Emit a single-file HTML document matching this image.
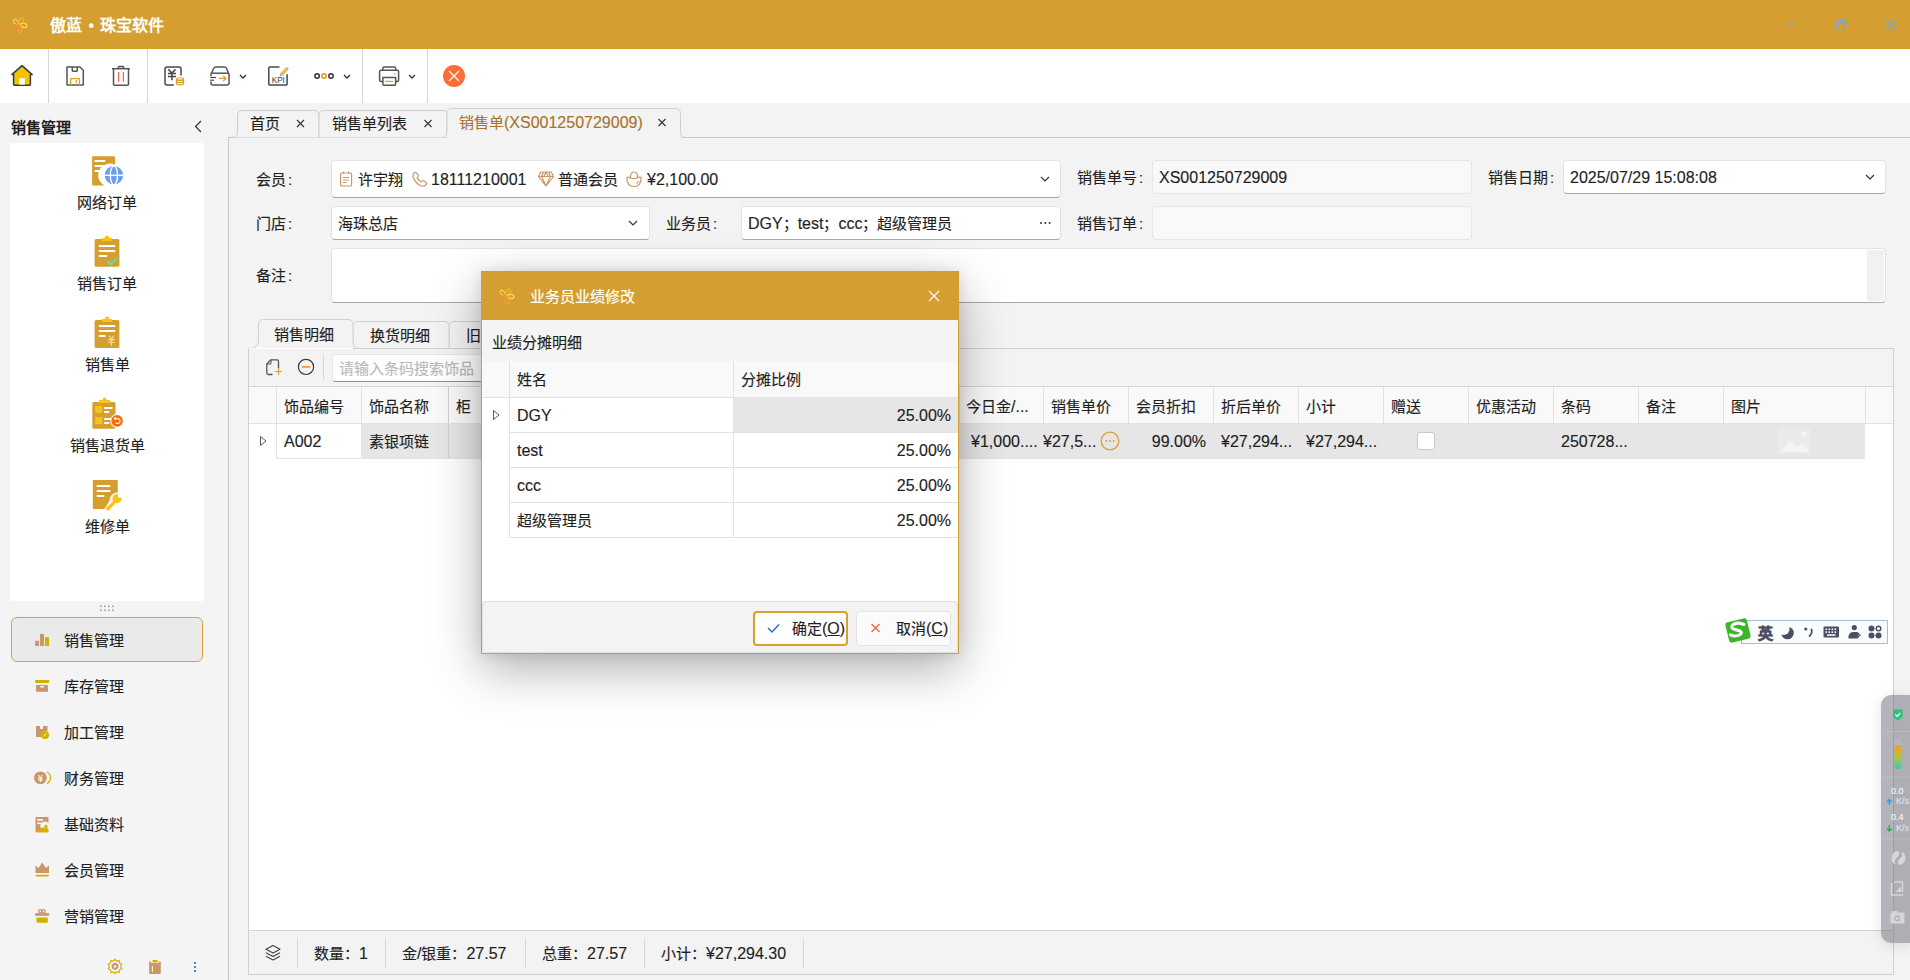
<!DOCTYPE html>
<html lang="zh-CN"><head><meta charset="utf-8">
<style>
*{box-sizing:border-box;margin:0;padding:0}
html,body{width:1910px;height:980px;overflow:hidden;background:#f3f3f3;font-family:"Liberation Sans",sans-serif;font-size:15px;color:#1f1f1f;-webkit-text-stroke:0.15px currentColor}
.a{position:absolute}
.t{position:absolute;white-space:nowrap;line-height:22px}
#title{left:0;top:0;width:1910px;height:49px;background:#d49f30}
#tb{left:0;top:49px;width:1910px;height:54px;background:#fff}
.sep{position:absolute;top:49px;width:1px;height:54px;background:#d6d6d6}
#side{left:0;top:103px;width:228px;height:877px;background:#f4f4f4}
.inp{position:absolute;background:#fff;border:1px solid #e3e3e3;border-bottom:1px solid #a8a8a8;border-radius:4px}
.ro{position:absolute;background:#f9f9f9;border:1px solid #e6e6e6;border-radius:4px}
.lbl{position:absolute;white-space:nowrap;line-height:22px;color:#1f1f1f}
.n{font-size:16px}
.col{position:absolute;top:0;height:100%;border-left:1px solid #e3e3e3}
</style></head><body>
<!-- title bar -->
<div id="title" class="a"></div>
<div class="t" style="left:50px;top:15px;color:#fff;font-weight:bold;font-size:16px;-webkit-text-stroke:0">傲蓝<span style="margin:0 1px 0 2px"> • </span>珠宝软件</div>

<!-- toolbar -->
<div id="tb" class="a"></div>
<div class="sep" style="left:48px"></div>
<div class="sep" style="left:147px"></div>
<div class="sep" style="left:362px"></div>
<div class="sep" style="left:427px"></div>


<svg class="a" style="left:0;top:0" width="1910" height="103" viewBox="0 0 1910 103">
 <!-- logo -->
 <g transform="translate(19.3,25)" fill="none" stroke-width="1.3"><path stroke="#f7d23a" d="M0,0 C-3.2,-2.5 -3.4,-6.5 -1.2,-7.6 C1.2,-8.4 2.6,-5 0,0Z" transform="rotate(-41)"/><path stroke="#f5b032" d="M0,0 C-3.2,-2.5 -3.4,-6.5 -1.2,-7.6 C1.2,-8.4 2.6,-5 0,0Z" transform="rotate(31)"/><path stroke="#fbe04a" d="M0,0 C-3.2,-2.5 -3.4,-6.5 -1.2,-7.6 C1.2,-8.4 2.6,-5 0,0Z" transform="rotate(103)"/><path stroke="#f3a53a" d="M0,0 C-3.2,-2.5 -3.4,-6.5 -1.2,-7.6 C1.2,-8.4 2.6,-5 0,0Z" transform="rotate(175)"/><path stroke="#f08a35" d="M0,0 C-3.2,-2.5 -3.4,-6.5 -1.2,-7.6 C1.2,-8.4 2.6,-5 0,0Z" transform="rotate(247)"/></g>
 <!-- window controls -->
 <g stroke="#72a9de" stroke-width="1.3" fill="none" stroke-linecap="round">
  <line x1="1786.5" y1="25.5" x2="1796" y2="25.5"/>
  <path d="M1838.5,22 V21.5 Q1838.5,20 1840,20 H1844.5 Q1846,20 1846,21.5 V26 Q1846,27.5 1844.5,27.5 H1844"/>
  <rect x="1836.5" y="22.3" width="7.2" height="7.4" rx="1.3"/>
  <line x1="1886" y1="20" x2="1896" y2="30"/><line x1="1896" y1="20" x2="1886" y2="30"/>
 </g>
 <!-- home -->
 <path d="M11.8,74.6 L22,65.6 L32.2,74.6 L30.4,74.6 L30.4,84.2 Q30.4,85.3 29.3,85.3 L14.7,85.3 Q13.6,85.3 13.6,84.2 L13.6,74.6 Z" fill="#f5c400" stroke="#333a45" stroke-width="1.5" stroke-linejoin="round"/>
 <rect x="19.2" y="78.2" width="5.6" height="6.4" fill="#fff"/>
 <!-- save -->
 <g fill="none" stroke="#555" stroke-width="1.5" stroke-linejoin="round">
  <path d="M67,67 H80 L83.3,70.3 V84.6 Q83.3,85.1 82.8,85.1 H67.5 Q67,85.1 67,84.6 Z"/>
  <path d="M72.3,67 V70.5 Q72.3,71.2 73,71.2 H76.6 Q77.3,71.2 77.3,70.5 V67"/>
 </g>
 <path d="M70.6,85 V79.2 Q70.6,78.6 71.2,78.6 H78.9 Q79.5,78.6 79.5,79.2 V85" fill="none" stroke="#d9a030" stroke-width="1.3"/>
 <line x1="76.3" y1="80" x2="76.3" y2="83" stroke="#d9a030" stroke-width="1.3"/>
 <!-- trash -->
 <g fill="none" stroke="#555" stroke-width="1.5" stroke-linejoin="round">
  <line x1="112" y1="68.7" x2="129.8" y2="68.7"/>
  <path d="M113.5,68.7 V84.6 Q113.5,85.3 114.2,85.3 H127.8 Q128.5,85.3 128.5,84.6 V68.7"/>
  <path d="M118.4,68.5 V67.2 Q118.4,66.6 119,66.6 H123 Q123.6,66.6 123.6,67.2 V68.5"/>
 </g>
 <g stroke="#f7643a" stroke-width="1.2"><line x1="118.6" y1="72" x2="118.6" y2="81.8"/><line x1="123.4" y1="72" x2="123.4" y2="81.8"/></g>
 <!-- yen doc -->
 <g fill="none" stroke="#484848" stroke-width="1.5" stroke-linejoin="round">
  <path d="M181,75.5 V68.9 Q181,66.9 179,66.9 H167 Q165,66.9 165,68.9 V83 Q165,85 167,85 H173.8"/>
  <path d="M168.3,69.4 L171.9,73 L175.5,69.4 M167.9,73.5 H176 M167.9,76.4 H176 M171.9,73 V80.2"/>
 </g>
 <g fill="none" stroke="#d9a030" stroke-width="1.1">
  <ellipse cx="180" cy="79" rx="3.6" ry="1.2"/><ellipse cx="180" cy="81.3" rx="3.6" ry="1.2"/><ellipse cx="180" cy="83.6" rx="3.6" ry="1.3"/>
  <path d="M176.4,79 V83.6 M183.6,79 V83.6"/>
 </g>
 <!-- drawer -->
 <g fill="none" stroke="#555" stroke-width="1.5" stroke-linejoin="round">
  <path d="M211,76.2 V74 L213.7,68.5 Q214.4,66.9 216,66.9 H224.3 Q225.9,66.9 226.6,68.5 L229,74 V83 Q229,85 227,85 H213 Q211,85 211,83 V81.4"/>
  <line x1="211.5" y1="73.2" x2="228.8" y2="73.2"/>
 </g>
 <g stroke="#444" stroke-width="1.2"><line x1="210.3" y1="77.5" x2="216" y2="77.5"/><line x1="210.3" y1="80.2" x2="214" y2="80.2"/></g>
 <path d="M219,78.4 H226 M223.3,75.9 L225.9,78.4 L223.3,80.9" fill="none" stroke="#d9a030" stroke-width="1.4"/>
 <!-- chevrons -->
 <g fill="none" stroke="#333" stroke-width="1.3"><path d="M240,75 L243,78 L246,75"/><path d="M344,75 L347,78 L350,75"/><path d="M409,75 L412,78 L415,75"/></g>
 <!-- KPI -->
 <g fill="none" stroke="#484848" stroke-width="1.5" stroke-linejoin="round">
  <path d="M279.4,66.9 H270 Q268.8,66.9 268.8,68.1 V83.9 Q268.8,85.1 270,85.1 H285.9 Q287.1,85.1 287.1,83.9 V74.2"/>
 </g>
 <text x="271.7" y="82.6" font-family="Liberation Sans" font-size="8.2" fill="#404040">KPI</text>
 <path d="M280.8,73.8 L286.4,68.1 Q286.9,67.6 287.4,68.1 L287.7,68.4 Q288.2,68.9 287.7,69.4 L282.1,75 L280.3,75.4 Z" fill="none" stroke="#d9a030" stroke-width="1.2" stroke-linejoin="round"/>
 <!-- dots -->
 <g fill="none" stroke-width="1.6"><circle cx="317.1" cy="76.1" r="2.2" stroke="#3d3d3d"/><circle cx="324" cy="76.1" r="2.2" stroke="#d9a030"/><circle cx="331" cy="76.1" r="2.2" stroke="#3d3d3d"/></g>
 <!-- printer -->
 <g fill="none" stroke="#555" stroke-width="1.5" stroke-linejoin="round">
  <path d="M382.9,70.3 V68 Q382.9,66.9 384,66.9 H394.5 Q395.6,66.9 395.6,68 V70.3"/>
  <path d="M382.6,81.5 H381 Q379.6,81.5 379.6,80 V71.8 Q379.6,70.3 381,70.3 H397.3 Q398.6,70.3 398.6,71.8 V80 Q398.6,81.5 397.3,81.5 H395.8"/>
  <path d="M382.3,77.5 H396.2"/>
  <path d="M382.9,77.8 V84 Q382.9,85.2 384,85.2 H394.5 Q395.6,85.2 395.6,84 V77.8"/>
 </g>
 <line x1="385.2" y1="81.4" x2="393" y2="81.4" stroke="#d9a030" stroke-width="1.2"/>
 <rect x="394.2" y="73.3" width="1.4" height="1.4" fill="#d9a030"/>
 <!-- close red -->
 <circle cx="454" cy="76" r="11" fill="#fd6d35"/>
 <path d="M449,71 L459,81 M459,71 L449,81" stroke="#fff" stroke-width="1.2"/>
</svg>

<!-- sidebar -->
<div id="side" class="a"></div>
<div class="t" style="left:11px;top:117px;font-weight:bold;font-size:15px;-webkit-text-stroke:0">销售管理</div>
<svg class="a" style="left:0;top:103px" width="228" height="877" viewBox="0 103 228 877">
 <path d="M201,121 L195.5,126.5 L201,132" fill="none" stroke="#333" stroke-width="1.2"/>
</svg>
<div class="a" style="left:10px;top:143px;width:194px;height:458px;background:#fff"></div>
<div class="t" style="left:0;width:214px;text-align:center;top:192px">网络订单</div>
<div class="t" style="left:0;width:214px;text-align:center;top:273px">销售订单</div>
<div class="t" style="left:0;width:214px;text-align:center;top:354px">销售单</div>
<div class="t" style="left:0;width:214px;text-align:center;top:435px">销售退货单</div>
<div class="t" style="left:0;width:214px;text-align:center;top:516px">维修单</div>
<div class="a" style="left:11px;top:617px;width:192px;height:45px;border:1px solid #d9a13a;border-radius:6px;background:#eaeaea"></div>
<div class="t" style="left:64px;top:630px">销售管理</div>
<div class="t" style="left:64px;top:676px">库存管理</div>
<div class="t" style="left:64px;top:722px">加工管理</div>
<div class="t" style="left:64px;top:768px">财务管理</div>
<div class="t" style="left:64px;top:814px">基础资料</div>
<div class="t" style="left:64px;top:860px">会员管理</div>
<div class="t" style="left:64px;top:906px">营销管理</div>
<svg class="a" style="left:0;top:140px" width="228" height="840" viewBox="0 140 228 840">
 <!-- 网络订单 -->
 <path d="M93.1,156.2 H114.1 Q115.1,156.2 115.1,157.2 V164.8 A10.8,10.8 0 0 0 104.6,185.6 H93.1 Q92.1,185.6 92.1,184.6 V157.2 Q92.1,156.2 93.1,156.2Z" fill="#d49f30"/>
 <g stroke="#fff" stroke-width="2" stroke-linecap="round"><line x1="95.3" y1="161" x2="104.5" y2="161"/><line x1="95.3" y1="166" x2="103.5" y2="166"/><line x1="95.3" y1="171" x2="100.5" y2="171"/></g>
 <circle cx="113.9" cy="175.3" r="9.2" fill="#6c9cf3"/>
 <g fill="none" stroke="#fff" stroke-width="1.4"><line x1="104" y1="175.3" x2="124" y2="175.3"/><ellipse cx="113.9" cy="175.3" rx="3.6" ry="9.4"/></g>
 <!-- 销售订单 -->
 <rect x="94.6" y="239" width="24.8" height="27.7" rx="1.5" fill="#d49f30"/>
 <rect x="101.8" y="238" width="10.3" height="3" fill="#fbc31a"/><circle cx="107" cy="237.7" r="2.2" fill="#fbc31a"/>
 <g stroke="#fff" stroke-width="2" stroke-linecap="round"><line x1="99.6" y1="246" x2="114.4" y2="246"/><line x1="99.6" y1="251" x2="114.4" y2="251"/><line x1="99.6" y1="256" x2="106.4" y2="256"/></g>
 <path d="M108,261.7 L110.7,264.3 L116.5,258.3" fill="none" stroke="#62d9b9" stroke-width="2.2" stroke-linecap="round"/>
 <!-- 销售单 -->
 <rect x="94.6" y="319.9" width="24.8" height="28" rx="1.5" fill="#d49f30"/>
 <rect x="101.8" y="319" width="10.3" height="3" fill="#fbc31a"/><circle cx="107" cy="318.7" r="2.2" fill="#fbc31a"/>
 <g stroke="#fff" stroke-width="2" stroke-linecap="round"><line x1="99.6" y1="326" x2="114.4" y2="326"/><line x1="99.6" y1="331" x2="114.4" y2="331"/><line x1="99.6" y1="336" x2="104.5" y2="336"/></g>
 <path d="M109.2,335.7 L111.4,339.3 L113.6,335.7 M108.3,339.6 H114.5 M108.3,342.3 H114.5 M111.4,339.3 V345.8" fill="none" stroke="#f8e08f" stroke-width="1.2"/>
 <!-- 销售退货单 -->
 <rect x="92.3" y="401.9" width="23.2" height="26.8" rx="1.5" fill="#d49f30"/>
 <rect x="99" y="400" width="11" height="3" fill="#fbc31a"/><circle cx="104.5" cy="399.5" r="2" fill="#fbc31a"/>
 <rect x="95.2" y="406" width="7" height="7" fill="#fbc31a"/><rect x="95.2" y="417" width="7" height="7" fill="#fbc31a"/>
 <g stroke="#fff" stroke-width="1.8" stroke-linecap="round"><line x1="104.8" y1="408" x2="111.8" y2="408"/><line x1="104.8" y1="412" x2="108.5" y2="412"/><line x1="104.8" y1="419" x2="111" y2="419"/><line x1="104.8" y1="423" x2="108.5" y2="423"/></g>
 <circle cx="117.1" cy="420.9" r="6.8" fill="#fff"/><circle cx="117.1" cy="420.9" r="5.8" fill="#ff6a00"/>
 <path d="M114.8,418.6 H117.6 A2.4,2.4 0 0 1 117.6,423.4 H115.5 M115.8,417.2 L114.4,418.6 L115.8,420" fill="none" stroke="#fff" stroke-width="1.1"/>
 <!-- 维修单 -->
 <path d="M93.8,480 H116.8 Q117.8,480 117.8,481 V492.5 A8,8 0 0 0 109.5,501 L104.6,509 H93.8 Q92.8,509 92.8,508 V481 Q92.8,480 93.8,480Z" fill="#d49f30"/>
 <g stroke="#fff" stroke-width="2" stroke-linecap="round"><line x1="97.5" y1="486" x2="109.5" y2="486"/><line x1="97.5" y1="491" x2="109.5" y2="491"/><line x1="97.5" y1="496" x2="103.5" y2="496"/></g>
 <path d="M107.8,508.8 L115,501.5" stroke="#fff" stroke-width="5.6" stroke-linecap="round"/>
 <circle cx="117" cy="498.6" r="5.8" fill="#fff"/>
 <path d="M107.8,508.8 L115,501.5" stroke="#f9c11a" stroke-width="3.4" stroke-linecap="round"/>
 <circle cx="117" cy="498.6" r="4.6" fill="#f9c11a"/>
 <circle cx="120.2" cy="495.4" r="2.5" fill="#fff"/>
 <!-- drag handle -->
 <g fill="#a0a0a0"><rect x="100" y="605.5" width="1.6" height="1.6"/><rect x="100" y="609.5" width="1.6" height="1.6"/><rect x="104" y="605.5" width="1.6" height="1.6"/><rect x="104" y="609.5" width="1.6" height="1.6"/><rect x="108" y="605.5" width="1.6" height="1.6"/><rect x="108" y="609.5" width="1.6" height="1.6"/><rect x="112" y="605.5" width="1.6" height="1.6"/><rect x="112" y="609.5" width="1.6" height="1.6"/></g>
 <!-- menu icons -->
 <g fill="#c8976a">
  <rect x="35.2" y="640.8" width="3.8" height="5.2"/><rect x="40" y="634" width="4" height="12"/>
  <rect x="36.1" y="684.9" width="11.8" height="6.9"/>
  <path d="M36,726 H40 V729 H43 V726 H47.5 V731 A5,5 0 0 0 41.5,737 H36 Z"/>
  <circle cx="40.4" cy="777.8" r="6.4"/>
  <path d="M36.5,817 H47.5 Q48.5,817 48.5,818 V823.5 A4.5,4.5 0 0 0 41,828.5 L37,832 Q35.5,832 35.5,831 V818 Q35.5,817 36.5,817Z"/>
  <path d="M35.5,865.5 L38.5,868 L42.2,862.5 L45.9,868 L49,865.5 V873 H35.5Z"/>
  <rect x="35.2" y="913.1" width="13.8" height="2.7"/>
 </g>
 <g fill="#d4b000">
  <rect x="44.9" y="637.1" width="4.1" height="8.9"/>
  <rect x="35.2" y="680" width="13.8" height="3"/>
  <circle cx="45" cy="734.9" r="4"/>
  <path d="M36.5,832.5 Q39,827.5 43,827.5 Q48,827.5 48.5,829.5 V832.5Z"/><circle cx="46" cy="826.4" r="1.6"/>
  <rect x="35.5" y="874.8" width="13.5" height="1.6" rx="0.8"/>
  <rect x="36.5" y="917.6" width="11.3" height="5.2" rx="0.8"/>
 </g>
 <rect x="40.2" y="686" width="3.8" height="1.4" fill="#fff"/>
 <path d="M46.9,772 A6.5,6.5 0 0 1 46.9,783.6" fill="none" stroke="#d4b000" stroke-width="1.3"/>
 <path d="M38.3,775 L40.4,777.5 L42.5,775 M38,778 H42.8 M38,780 H42.8 M40.4,777.5 V782" fill="none" stroke="#fff" stroke-width="1"/>
 <path d="M43.5,736.5 L46.2,733.6" stroke="#fff" stroke-width="1"/>
 <g fill="#fff"><rect x="37.3" y="819" width="5.7" height="1.6"/><rect x="37.3" y="822.5" width="3.8" height="1.6"/></g>
 <g fill="none" stroke="#c8976a" stroke-width="1.3"><circle cx="40.3" cy="911.2" r="1.6"/><circle cx="43.7" cy="911.2" r="1.6"/></g>
 <!-- bottom icons -->
 <path d="M115,959.3 L116.6,961.2 L119.1,960.6 L119.5,963.1 L121.8,964.3 L120.6,966.5 L121.8,968.8 L119.5,969.9 L119.1,972.4 L116.6,971.8 L115,973.8 L113.4,971.8 L110.9,972.4 L110.5,969.9 L108.2,968.8 L109.4,966.5 L108.2,964.3 L110.5,963.1 L110.9,960.6 L113.4,961.2 Z" fill="none" stroke="#d4b000" stroke-width="1.2"/>
 <path d="M115,962.6 L118.3,964.5 V968.3 L115,970.2 L111.7,968.3 V964.5Z" fill="#c8976a"/>
 <circle cx="115" cy="966.5" r="1.2" fill="#fff"/>
 <rect x="149.1" y="961.6" width="11.7" height="12.3" rx="0.8" fill="#c8976a"/>
 <rect x="151.3" y="960.2" width="7.4" height="2.8" fill="#fff"/><rect x="152.5" y="960" width="5.3" height="2.5" fill="#d4b000"/>
 <rect x="151.9" y="966" width="0.9" height="6" fill="#fff"/>
 <g fill="#1e9be0"><rect x="194" y="962" width="2" height="2"/><rect x="194" y="966" width="2" height="2"/><rect x="194" y="970" width="2" height="2"/></g>
</svg>

<!-- content -->
<div class="a" style="left:228px;top:137px;width:1682px;height:843px;border-left:1px solid #c8c8c8;border-top:1px solid #c8c8c8;background:#f3f3f3"></div>
<svg class="a" style="left:228px;top:100px" width="500" height="40" viewBox="228 100 500 40">
 <path d="M232,137.5 Q237.5,137.5 237.5,132 V115.5 Q237.5,110.5 242.5,110.5 H314 Q319,110.5 319,115.5 V137.5" fill="#f3f3f3" stroke="#cfcfcf" stroke-width="1"/>
 <path d="M319,137.5 V115.5 Q319,110.5 324,110.5 H442 Q447,110.5 447,115.5 V137.5" fill="#f3f3f3" stroke="#cfcfcf" stroke-width="1"/>
 <path d="M441.5,137.5 Q447,137.5 447,132 V113.5 Q447,108.5 452,108.5 H675.5 Q680.5,108.5 680.5,113.5 V132 Q680.5,137.5 686,137.5" fill="#f3f3f3" stroke="#cfcfcf" stroke-width="1"/>
 <rect x="448" y="136" width="232" height="3" fill="#f3f3f3"/>
 <g stroke="#333" stroke-width="1.1"><path d="M297,120 L304,127 M304,120 L297,127"/><path d="M424.5,120 L431.5,127 M431.5,120 L424.5,127"/><path d="M658.5,119 L665.5,126 M665.5,119 L658.5,126"/></g>
</svg>
<div class="t" style="left:250px;top:113px">首页</div>
<div class="t" style="left:332px;top:113px">销售单列表</div>
<div class="t" style="left:459px;top:112px;color:#a8742a">销售单<span class="n">(XS001250729009)</span></div>

<!-- form -->
<div class="lbl" style="left:256px;top:169px">会员<span style="margin-left:2px">:</span></div>
<div class="lbl" style="left:256px;top:213px">门店<span style="margin-left:2px">:</span></div>
<div class="lbl" style="left:256px;top:265px">备注<span style="margin-left:2px">:</span></div>
<div class="lbl" style="left:666px;top:213px">业务员<span style="margin-left:2px">:</span></div>
<div class="lbl" style="left:1077px;top:167px">销售单号<span style="margin-left:2px">:</span></div>
<div class="lbl" style="left:1077px;top:213px">销售订单<span style="margin-left:2px">:</span></div>
<div class="lbl" style="left:1488px;top:167px">销售日期<span style="margin-left:2px">:</span></div>
<div class="inp" style="left:331px;top:160px;width:730px;height:38px"></div>
<div class="inp" style="left:331px;top:206px;width:319px;height:34px"></div>
<div class="inp" style="left:741px;top:206px;width:320px;height:34px"></div>
<div class="ro" style="left:1152px;top:160px;width:320px;height:34px"></div>
<div class="ro" style="left:1152px;top:206px;width:320px;height:34px"></div>
<div class="inp" style="left:1563px;top:160px;width:323px;height:34px"></div>
<div class="inp" style="left:331px;top:248px;width:1555px;height:55px"></div>
<div class="a" style="left:1867px;top:250px;width:17px;height:51px;background:#f1f1f1"></div>
<div class="t" style="left:358px;top:169px">许宇翔</div>
<div class="t" style="left:431px;top:169px"><span class="n">18111210001</span></div>
<div class="t" style="left:558px;top:169px">普通会员</div>
<div class="t" style="left:647px;top:169px"><span class="n">¥2,100.00</span></div>
<div class="t" style="left:338px;top:213px">海珠总店</div>
<div class="t" style="left:748px;top:213px"><span class="n">DGY</span>；<span class="n">test</span>；<span class="n">ccc</span>；超级管理员</div>
<div class="t" style="left:1159px;top:167px"><span class="n">XS001250729009</span></div>
<div class="t" style="left:1570px;top:167px"><span class="n">2025/07/29 15:08:08</span></div>
<svg class="a" style="left:320px;top:150px" width="1580" height="100" viewBox="320 150 1580 100">
 <g fill="none" stroke="#333" stroke-width="1.2"><path d="M1041,177 L1045,181 L1049,177"/><path d="M629,221 L633,225 L637,221"/><path d="M1866,175 L1870,179 L1874,175"/></g>
 <g fill="#333"><circle cx="1041" cy="223" r="1"/><circle cx="1045.3" cy="223" r="1"/><circle cx="1049.6" cy="223" r="1"/></g>
 <g fill="none" stroke="#c8976a" stroke-width="1.2" stroke-linejoin="round">
  <rect x="340.6" y="173" width="11" height="13" rx="1"/>
  <path d="M343.5,171.4 V174 M348.6,171.4 V174 M343,177.5 H349 M343,180 H349 M343,182.5 H346.5"/>
  <path d="M414.5,172.5 Q412.5,173.8 413,176.5 Q414.5,182 420,185.5 Q423,187 425,185.5 L426.5,184 Q427,183.2 426.2,182.6 L423.6,180.8 Q422.8,180.3 422.2,181 L421.4,182 Q418.5,180.5 417,177.6 L418,176.6 Q418.6,176 418.1,175.2 L416.2,172.7 Q415.6,172 414.5,172.5Z"/>
  <path d="M540.8,172 H551.2 L553.6,176.5 L546,186 L538.4,176.5Z M538.6,176.5 H553.4 M543.2,172.2 L541.6,176.5 L546,186 L550.4,176.5 L548.8,172.2 M546,172.2 L543.6,176.5 M546,172.2 L548.4,176.5"/>
  <path d="M626.8,177.5 Q627,186.5 634,186.5 Q641,186.5 641.2,177.5 Q639.5,176.5 637.5,178 M630.5,178 Q628.5,176.5 626.8,177.5 M630.5,178 Q630,172 634,172 Q638,172 637.5,178 Q634,179.5 630.5,178 M638.5,181 L636.5,183.5"/>
 </g>
</svg>


<!-- inner tabs + grid -->
<svg class="a" style="left:240px;top:310px" width="360" height="45" viewBox="240 310 360 45">
 <path d="M449,348.5 V326.5 Q449,321.5 454,321.5 H540 Q545,321.5 545,326.5 V348.5" fill="#f3f3f3" stroke="#d0d0d0"/>
 <path d="M353,348.5 V326.5 Q353,321.5 358,321.5 H444 Q449,321.5 449,326.5 V348.5" fill="#f3f3f3" stroke="#d0d0d0"/>
 <path d="M248.5,348.5 Q258.5,348.5 258.5,340 V324.5 Q258.5,319.5 263.5,319.5 H348 Q353,319.5 353,324.5 V340 Q353,348.5 358,348.5" fill="#f3f3f3" stroke="#d0d0d0"/>
 <rect x="259" y="347" width="94" height="3" fill="#f3f3f3"/>
</svg>
<div class="t" style="left:274px;top:324px">销售明细</div>
<div class="t" style="left:370px;top:325px">换货明细</div>
<div class="t" style="left:466px;top:325px">旧料明细</div>
<div class="a" style="left:248px;top:348px;width:1646px;height:627px;border:1px solid #d0d0d0;border-top:none;background:#fff"></div>
<div class="a" style="left:353px;top:348px;width:1541px;height:1px;background:#d0d0d0"></div>
<div class="a" style="left:249px;top:349px;width:1644px;height:38px;background:#f3f3f3;border-bottom:1px solid #d6d6d6"></div>
<div class="a" style="left:323px;top:355px;width:1px;height:25px;background:#d6d6d6"></div>
<div class="inp" style="left:332px;top:354px;width:300px;height:28px;border-color:#e6e6e6;border-bottom-color:#8f8f8f"></div>
<div class="t" style="left:339px;top:358px;color:#b9b9b9">请输入条码搜索饰品</div>
<svg class="a" style="left:255px;top:350px" width="70" height="35" viewBox="255 350 70 35">
 <path d="M278.5,368 V361.4 Q278.5,359.8 277,359.8 H271 L266.8,364 V373 Q266.8,374.5 268.3,374.5 H272.5" fill="none" stroke="#555" stroke-width="1.3" stroke-linejoin="round"/>
 <path d="M271,359.8 V363 Q271,364 270,364 H266.8" fill="none" stroke="#555" stroke-width="1.1"/>
 <path d="M275,371.5 H282 M278.5,368 V375" stroke="#d9a030" stroke-width="1.2"/>
 <circle cx="306" cy="366.9" r="7.6" fill="none" stroke="#3a3a3a" stroke-width="1.2"/>
 <path d="M301.8,366.9 H310.2" stroke="#f7943a" stroke-width="1.8"/>
</svg>
<!-- grid header -->
<div class="a" style="left:249px;top:387px;width:1644px;height:37px;background:#f9f9f9;border-bottom:1px solid #e2e2e2"></div>
<div class="a" style="left:249px;top:424px;width:28px;height:35px;background:#fff"></div>
<div class="a" style="left:277px;top:424px;width:84px;height:34px;background:#fff"></div>
<div class="a" style="left:361px;top:424px;width:1504px;height:34px;background:#e6e6e6"></div>
<div class="a" style="left:276px;top:458px;width:1589px;height:1px;background:#e2e2e2"></div>
<div class="a" style="left:276px;top:387px;width:1px;height:36px;background:#e2e2e2"></div><div class="a" style="left:276px;top:424px;width:1px;height:35px;background:#e2e2e2"></div><div class="a" style="left:361px;top:387px;width:1px;height:36px;background:#e2e2e2"></div><div class="a" style="left:448px;top:387px;width:1px;height:36px;background:#cfcfcf"></div><div class="a" style="left:448px;top:424px;width:1px;height:34px;background:#cfcfcf"></div><div class="a" style="left:533px;top:387px;width:1px;height:36px;background:#e2e2e2"></div><div class="a" style="left:618px;top:387px;width:1px;height:36px;background:#e2e2e2"></div><div class="a" style="left:703px;top:387px;width:1px;height:36px;background:#e2e2e2"></div><div class="a" style="left:788px;top:387px;width:1px;height:36px;background:#e2e2e2"></div><div class="a" style="left:873px;top:387px;width:1px;height:36px;background:#e2e2e2"></div><div class="a" style="left:959px;top:387px;width:1px;height:36px;background:#e2e2e2"></div><div class="a" style="left:1043px;top:387px;width:1px;height:36px;background:#e2e2e2"></div><div class="a" style="left:1128px;top:387px;width:1px;height:36px;background:#e2e2e2"></div><div class="a" style="left:1213px;top:387px;width:1px;height:36px;background:#e2e2e2"></div><div class="a" style="left:1298px;top:387px;width:1px;height:36px;background:#e2e2e2"></div><div class="a" style="left:1383px;top:387px;width:1px;height:36px;background:#e2e2e2"></div><div class="a" style="left:1468px;top:387px;width:1px;height:36px;background:#e2e2e2"></div><div class="a" style="left:1553px;top:387px;width:1px;height:36px;background:#e2e2e2"></div><div class="a" style="left:1638px;top:387px;width:1px;height:36px;background:#e2e2e2"></div><div class="a" style="left:1723px;top:387px;width:1px;height:36px;background:#e2e2e2"></div><div class="a" style="left:1865px;top:387px;width:1px;height:36px;background:#e2e2e2"></div>
<div class="t" style="left:284px;top:396px">饰品编号</div>
<div class="t" style="left:369px;top:396px">饰品名称</div>
<div class="t" style="left:456px;top:396px">柜</div>
<div class="t" style="left:966px;top:396px">今日金<span class="n">/...</span></div>
<div class="t" style="left:1051px;top:396px">销售单价</div>
<div class="t" style="left:1136px;top:396px">会员折扣</div>
<div class="t" style="left:1221px;top:396px">折后单价</div>
<div class="t" style="left:1306px;top:396px">小计</div>
<div class="t" style="left:1391px;top:396px">赠送</div>
<div class="t" style="left:1476px;top:396px">优惠活动</div>
<div class="t" style="left:1561px;top:396px">条码</div>
<div class="t" style="left:1646px;top:396px">备注</div>
<div class="t" style="left:1731px;top:396px">图片</div>
<div class="t n" style="left:284px;top:431px">A002</div>
<div class="t" style="left:369px;top:431px">素银项链</div>
<div class="t n" style="left:971px;top:431px">¥1,000....</div>
<div class="t n" style="left:1043px;top:431px">¥27,5...</div>
<div class="t n" style="left:1128px;top:431px;width:78px;text-align:right">99.00%</div>
<div class="t n" style="left:1221px;top:431px">¥27,294...</div>
<div class="t n" style="left:1306px;top:431px">¥27,294...</div>
<div class="t n" style="left:1561px;top:431px">250728...</div>
<div class="a" style="left:1417px;top:432px;width:18px;height:18px;background:#fff;border:1px solid #c9c9c9;border-radius:3px"></div>
<svg class="a" style="left:250px;top:420px" width="1600" height="40" viewBox="250 420 1600 40">
 <path d="M260.5,436.5 L266,441 L260.5,445.5Z" fill="none" stroke="#555" stroke-width="1"/>
 <circle cx="1110" cy="441" r="8.8" fill="none" stroke="#d9a030" stroke-width="1.3"/>
 <g fill="#d9a030"><circle cx="1106.3" cy="441" r="1"/><circle cx="1110" cy="441" r="1"/><circle cx="1113.7" cy="441" r="1"/></g>
 <rect x="1778" y="427.5" width="33" height="27" rx="4" fill="#eaeaea"/>
 <path d="M1780,452 L1790,440 L1797,447 L1802,443 L1810,452Z" fill="#f4f4f4"/>
 <circle cx="1804" cy="434" r="2.5" fill="#f4f4f4"/>
</svg>

<!-- status bar -->
<div class="a" style="left:249px;top:930px;width:1644px;height:44px;background:#f3f3f3;border-top:1px solid #d6d6d6"></div>
<div class="a" style="left:297px;top:939px;width:1px;height:29px;background:#d6d6d6"></div>
<div class="a" style="left:385px;top:939px;width:1px;height:29px;background:#d6d6d6"></div>
<div class="a" style="left:525px;top:939px;width:1px;height:29px;background:#d6d6d6"></div>
<div class="a" style="left:644px;top:939px;width:1px;height:29px;background:#d6d6d6"></div>
<div class="a" style="left:803px;top:939px;width:1px;height:29px;background:#d6d6d6"></div>
<div class="t" style="left:314px;top:943px">数量：<span class="n">1</span></div>
<div class="t" style="left:402px;top:943px">金<span class="n">/</span>银重：<span class="n">27.57</span></div>
<div class="t" style="left:542px;top:943px">总重：<span class="n">27.57</span></div>
<div class="t" style="left:661px;top:943px">小计：<span class="n">¥27,294.30</span></div>
<svg class="a" style="left:260px;top:940px" width="30" height="30" viewBox="260 940 30 30">
 <g fill="none" stroke="#444" stroke-width="1.2" stroke-linejoin="round">
  <path d="M273,945.5 L280,949.3 L273,953 L266,949.3Z"/>
  <path d="M266,952.8 L273,956.5 L280,952.8"/>
  <path d="M266,956.3 L273,960 L280,956.3"/>
 </g>
</svg>
<!-- DIALOG -->
<div class="a" style="left:481px;top:271px;width:478px;height:383px;box-shadow:0 16px 46px rgba(0,0,0,0.30),0 0 14px rgba(0,0,0,0.10);background:#d49f30"></div>
<div class="a" style="left:482px;top:320px;width:476px;height:333px;background:#f4f4f4"></div>
<svg class="a" style="left:481px;top:271px" width="478" height="50" viewBox="481 271 478 50">
 <g transform="translate(506.3,296)" fill="none" stroke-width="1.3"><path stroke="#f7d23a" d="M0,0 C-3.2,-2.5 -3.4,-6.5 -1.2,-7.6 C1.2,-8.4 2.6,-5 0,0Z" transform="rotate(-41)"/><path stroke="#f5b032" d="M0,0 C-3.2,-2.5 -3.4,-6.5 -1.2,-7.6 C1.2,-8.4 2.6,-5 0,0Z" transform="rotate(31)"/><path stroke="#fbe04a" d="M0,0 C-3.2,-2.5 -3.4,-6.5 -1.2,-7.6 C1.2,-8.4 2.6,-5 0,0Z" transform="rotate(103)"/><path stroke="#f3a53a" d="M0,0 C-3.2,-2.5 -3.4,-6.5 -1.2,-7.6 C1.2,-8.4 2.6,-5 0,0Z" transform="rotate(175)"/><path stroke="#f08a35" d="M0,0 C-3.2,-2.5 -3.4,-6.5 -1.2,-7.6 C1.2,-8.4 2.6,-5 0,0Z" transform="rotate(247)"/></g>
 <path d="M929,291 L939,301 M939,291 L929,301" stroke="#fff" stroke-width="1.1"/>
</svg>
<div class="t" style="left:530px;top:286px;color:#fff">业务员业绩修改</div>
<div class="t" style="left:492px;top:332px">业绩分摊明细</div>
<div class="a" style="left:482px;top:362px;width:476px;height:239px;background:#fff"></div>
<div class="a" style="left:482px;top:362px;width:476px;height:36px;background:#f9f9f9;border-bottom:1px solid #e2e2e2"></div>
<div class="a" style="left:509px;top:362px;width:1px;height:176px;background:#e2e2e2"></div>
<div class="a" style="left:733px;top:362px;width:1px;height:176px;background:#e2e2e2"></div>
<div class="a" style="left:734px;top:398px;width:224px;height:34px;background:#e6e6e6"></div>
<div class="a" style="left:509px;top:432px;width:449px;height:1px;background:#e2e2e2"></div>
<div class="a" style="left:509px;top:467px;width:449px;height:1px;background:#e2e2e2"></div>
<div class="a" style="left:509px;top:502px;width:449px;height:1px;background:#e2e2e2"></div>
<div class="a" style="left:509px;top:537px;width:449px;height:1px;background:#e2e2e2"></div>
<div class="t" style="left:517px;top:369px">姓名</div>
<div class="t" style="left:741px;top:369px">分摊比例</div>
<div class="t n" style="left:517px;top:405px">DGY</div>
<div class="t n" style="left:517px;top:440px">test</div>
<div class="t n" style="left:517px;top:475px">ccc</div>
<div class="t" style="left:517px;top:510px">超级管理员</div>
<div class="t n" style="left:740px;top:405px;width:211px;text-align:right">25.00%</div>
<div class="t n" style="left:740px;top:440px;width:211px;text-align:right">25.00%</div>
<div class="t n" style="left:740px;top:475px;width:211px;text-align:right">25.00%</div>
<div class="t n" style="left:740px;top:510px;width:211px;text-align:right">25.00%</div>
<div class="a" style="left:482px;top:601px;width:476px;height:52px;background:#f3f3f3;border:1px solid #e0e0e0;border-radius:4px"></div>
<div class="a" style="left:753px;top:611px;width:95px;height:35px;background:#fff;border:2px solid #d9a030;border-radius:4px"></div>
<div class="a" style="left:856px;top:611px;width:95px;height:35px;background:#fbfbfb;border:1px solid #e3e3e3;border-radius:4px"></div>
<div class="t" style="left:792px;top:618px">确定<span class="n">(<u>O</u>)</span></div>
<div class="t" style="left:896px;top:618px">取消<span class="n">(<u>C</u>)</span></div>
<svg class="a" style="left:482px;top:395px" width="480" height="260" viewBox="482 395 480 260">
 <path d="M493.5,410.5 L499,415 L493.5,419.5Z" fill="none" stroke="#555" stroke-width="1"/>
 <path d="M768,628 L772,632 L779,624.5" fill="none" stroke="#1f6fc5" stroke-width="1.4"/>
 <path d="M871.5,624 L879.5,632 M879.5,624 L871.5,632" stroke="#f3603a" stroke-width="1.3"/>
</svg>


<!-- IME -->
<div class="a" style="left:1741px;top:620px;width:147px;height:24px;background:#fafbfd;border:1px solid #a9bcd3"></div>
<svg class="a" style="left:1720px;top:612px" width="175" height="38" viewBox="1720 612 175 38">
 <rect x="1727" y="620" width="22" height="21" rx="3" fill="#3db52a" transform="rotate(-14 1738 630.5)"/>
 <path d="M1744,624.5 Q1737,621.5 1732.5,625 Q1730,628 1735,629.5 L1740,631 Q1743,632.5 1739.5,635 Q1735,637 1730.5,634.8" fill="none" stroke="#fff" stroke-width="3" stroke-linecap="round"/>
 <text x="1757.5" y="638.5" font-size="15" font-weight="bold" fill="#4a4f63" stroke="#4a4f63" stroke-width="0.5">英</text>
 <circle cx="1787.5" cy="633" r="6.3" fill="#4a4f63"/><circle cx="1783.6" cy="629" r="6" fill="#fafbfd"/>
 <circle cx="1805.8" cy="629" r="1.6" fill="#4a4f63"/>
 <path d="M1811.5,629.5 Q1812.5,633.5 1809.5,636" fill="none" stroke="#4a4f63" stroke-width="1.8" stroke-linecap="round"/>
 <rect x="1823.5" y="626.5" width="15.5" height="11" rx="1.3" fill="#4a4f63"/>
 <g fill="#fff"><rect x="1825.5" y="628.5" width="1.6" height="1.6"/><rect x="1828.5" y="628.5" width="1.6" height="1.6"/><rect x="1831.5" y="628.5" width="1.6" height="1.6"/><rect x="1834.5" y="628.5" width="1.6" height="1.6"/>
 <rect x="1825.5" y="631.3" width="1.6" height="1.6"/><rect x="1828.5" y="631.3" width="1.6" height="1.6"/><rect x="1831.5" y="631.3" width="1.6" height="1.6"/><rect x="1834.5" y="631.3" width="1.6" height="1.6"/><rect x="1827" y="634.3" width="8.5" height="1.5"/></g>
 <circle cx="1854.3" cy="627.6" r="2.6" fill="#4a4f63"/>
 <path d="M1848.5,638.5 Q1848,632.5 1853,632 L1857,632 Q1859,632.5 1859.5,634 L1856,638.5Z" fill="#4a4f63"/>
 <path d="M1855.5,636 L1857,638 L1860.5,634.5" fill="none" stroke="#4a4f63" stroke-width="1.2"/>
 <g fill="#4a4f63"><circle cx="1871.5" cy="628.5" r="3"/><circle cx="1871.5" cy="635.5" r="3"/><circle cx="1878.5" cy="635.5" r="3"/></g>
 <circle cx="1878.5" cy="628.5" r="2.3" fill="none" stroke="#4a4f63" stroke-width="1.4"/>
</svg>
<!-- floating widget -->
<div class="a" style="left:1881px;top:695px;width:29px;height:248px;background:rgba(112,114,122,0.52);border-radius:10px 0 0 10px;box-shadow:0 2px 14px rgba(0,0,0,0.12)"></div>
<svg class="a" style="left:1881px;top:695px" width="29" height="247" viewBox="1881 695 29 247">
 <path d="M1893,709.5 H1902.5 V717 L1897.75,720.5 L1893,717Z" fill="#2fc07a"/>
 <path d="M1895.3,714.5 L1897.2,716.3 L1900.3,712.8" fill="none" stroke="#fff" stroke-width="1.2"/>
 <g stroke="#b9babe" stroke-width="1"><line x1="1882" y1="731.5" x2="1910" y2="731.5"/><line x1="1882" y1="777" x2="1910" y2="777"/><line x1="1882" y1="839" x2="1910" y2="839"/></g>
 <defs><linearGradient id="thm" x1="0" y1="0" x2="0" y2="1"><stop offset="0" stop-color="#f39a1c"/><stop offset="0.5" stop-color="#b9c43a"/><stop offset="1" stop-color="#37c9c0"/></linearGradient></defs>
 <rect x="1894.5" y="738" width="7" height="31" rx="3.5" fill="#b5b6ba"/>
 <rect x="1894.5" y="745" width="7" height="24" rx="3" fill="url(#thm)"/>
 <text x="1891" y="794" font-family="Liberation Sans" font-size="9" fill="#fff">0.0</text>
 <text x="1896" y="804" font-family="Liberation Sans" font-size="9" fill="#e8e8ea">K/s</text>
 <path d="M1889.3,805 V800 M1887,802 L1889.3,799.5 L1891.6,802" fill="none" stroke="#2a9df4" stroke-width="1.2"/>
 <text x="1891" y="820" font-family="Liberation Sans" font-size="9" fill="#fff">0.4</text>
 <text x="1896" y="831" font-family="Liberation Sans" font-size="9" fill="#e8e8ea">K/s</text>
 <path d="M1889.3,825 V831 M1887,828.5 L1889.3,831 L1891.6,828.5" fill="none" stroke="#18b04c" stroke-width="1.2"/>
 <path d="M1898,851 A7,7 0 0 0 1896,864.5 Q1893,861 1897,857.5 Q1901,854 1898,851Z M1899,865 A7,7 0 0 0 1901,851.5 Q1904,855 1900,858.5 Q1896,862 1899,865Z" fill="#d5d6d9"/>
 <path d="M1891.5,883 V895 H1903.5 M1894,882 H1902.5 V892" fill="none" stroke="#d5d6d9" stroke-width="1.5"/>
 <path d="M1895.5,892 L1901,886.5 V892Z" fill="#d5d6d9"/>
 <rect x="1890.5" y="912.5" width="14" height="11" rx="1.5" fill="#d5d6d9"/>
 <rect x="1892.5" y="911" width="5" height="2.5" fill="#d5d6d9"/>
 <circle cx="1897" cy="918.3" r="2.3" fill="none" stroke="#a0a1a6" stroke-width="1"/>
 <line x1="1898.6" y1="920" x2="1900" y2="921.4" stroke="#a0a1a6" stroke-width="1"/>
</svg>

</body></html>
